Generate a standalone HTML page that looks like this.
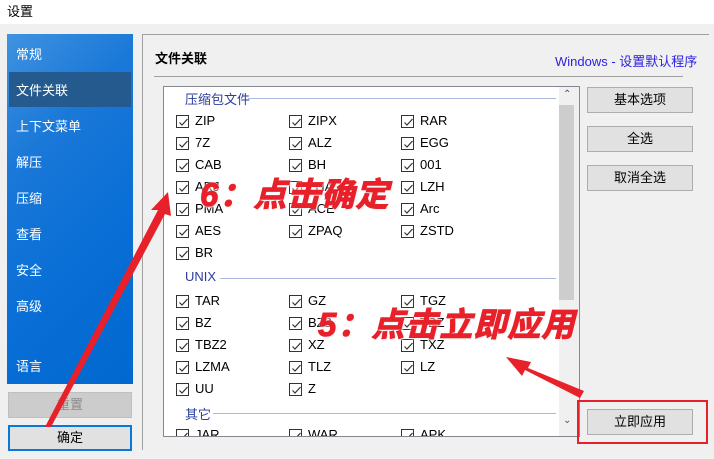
<!DOCTYPE html><html><head><meta charset="utf-8"><style>
*{margin:0;padding:0;box-sizing:border-box}
body{width:714px;height:459px;background:#f0f0f0;position:relative;overflow:hidden;font-family:"Liberation Sans","Noto Sans CJK SC",sans-serif;font-size:13px;color:#000}
.a{position:absolute}
.title{left:0;top:0;width:714px;height:24px;background:#fff}
.side{left:7px;top:34px;width:126px;height:350px;background:linear-gradient(135deg,#3f93e0 0%,#1a78d8 30%,#0a6fd6 60%,#0068d0 100%)}
.si{position:absolute;left:9px;color:#fff;font-size:13px}
.sel{left:9px;top:72px;width:122px;height:35px;background:#245a8e}
.btn{background:#e1e1e1;border:1px solid #adadad;text-align:center;line-height:24px;font-size:13px}
.cb{position:absolute;width:13px;height:13px;border:1px solid #333;background:#fff}
.cb svg{position:absolute;left:1px;top:1px}
.lb{position:absolute;font-size:13px;color:#000}
.gh{position:absolute;color:#2a3c9c;font-size:13px}
.gl{position:absolute;height:1px;background:#a9b9e0}
.ann{position:absolute;color:#e8202a;font-weight:bold;font-style:italic;font-size:33px;-webkit-text-stroke:1px #e8202a;text-shadow:0 0 2px #fff,0 0 3px #fff,1px 1px 2px #ddd;letter-spacing:1px;white-space:nowrap;line-height:36px}
</style></head><body>
<div class="a title"></div>
<div class="a" style="left:7px;top:1px;font-size:13px">设置</div>
<div class="a side"></div>
<div class="a sel"></div>
<div class="si" style="left:16px;top:44px">常规</div>
<div class="si" style="left:16px;top:80px">文件关联</div>
<div class="si" style="left:16px;top:116px">上下文菜单</div>
<div class="si" style="left:16px;top:152px">解压</div>
<div class="si" style="left:16px;top:188px">压缩</div>
<div class="si" style="left:16px;top:224px">查看</div>
<div class="si" style="left:16px;top:260px">安全</div>
<div class="si" style="left:16px;top:296px">高级</div>
<div class="si" style="left:16px;top:356px">语言</div>
<div class="a btn" style="left:8px;top:392px;width:124px;height:26px;background:#cccccc;border-color:#bfbfbf;color:#8a8a8a">重置</div>
<div class="a btn" style="left:8px;top:425px;width:124px;height:26px;border:2px solid #0a78d7;line-height:22px">确定</div>
<div class="a" style="left:142px;top:34px;width:567px;height:416px;border:1px solid #a0a0a0;border-right:none;border-bottom:none"></div>
<div class="a" style="left:155px;top:48px;font-weight:bold;font-size:13px">文件关联</div>
<div class="a" style="left:555px;top:51px;color:#2a1fe0;font-size:13px">Windows - 设置默认程序</div>
<div class="a" style="left:154px;top:76px;width:529px;height:1px;background:#a0a0a0"></div>
<div class="a" style="left:163px;top:86px;width:417px;height:351px;border:1px solid #828790;background:#fff"></div>
<div class="a" style="left:559px;top:87px;width:20px;height:349px;background:#f0f0f0"></div>
<div class="a" style="left:559px;top:105px;width:15px;height:195px;background:#cdcdcd"></div>
<div class="a" style="left:563px;top:89px;font-size:10px;color:#555">&#8963;</div>
<div class="a" style="left:563px;top:415px;font-size:10px;color:#555">&#8964;</div>
<div class="a btn" style="left:587px;top:87px;width:106px;height:26px">基本选项</div>
<div class="a btn" style="left:587px;top:126px;width:106px;height:26px">全选</div>
<div class="a btn" style="left:587px;top:165px;width:106px;height:26px">取消全选</div>
<div class="a btn" style="left:587px;top:409px;width:106px;height:26px">立即应用</div>
<div class="a" style="left:577px;top:400px;width:131px;height:44px;border:2px solid #e8202a"></div>
<div id="list"></div>
<div class="ann" style="left:200px;top:177px">6：点击确定</div>
<div class="ann" style="left:318px;top:307px">5：点击立即应用</div>
<svg class="a" style="left:0;top:0" width="714" height="459">
<polygon points="45,427 51,427 165,214 171,216 168,192 151,210 158,210" fill="#e8202a"/>
<polygon points="580,398 584,391 528,368 531,362 506,357 522,376 525,370" fill="#e8202a"/>
</svg>
<script>
var rows=[
[98,'g','压缩包文件',248],
[121,'ZIP','ZIPX','RAR'],[143,'7Z','ALZ','EGG'],[165,'CAB','BH','001'],[187,'ARJ','LHA','LZH'],[209,'PMA','ACE','Arc'],[231,'AES','ZPAQ','ZSTD'],[253,'BR'],
[278,'g','UNIX',220],
[301,'TAR','GZ','TGZ'],[323,'BZ','BZ2','TBZ'],[345,'TBZ2','XZ','TXZ'],[367,'LZMA','TLZ','LZ'],[389,'UU','Z'],
[413,'g','其它',213],
[435,'JAR','WAR','APK']];
var h='',xs=[176,289,401];
rows.forEach(function(r){var y=r[0];
if(r[1]=='g'){h+='<div class="gh" style="left:185px;top:'+(y-9)+'px">'+r[2]+'</div><div class="gl" style="left:'+r[3]+'px;top:'+y+'px;width:'+(556-r[3])+'px"></div>';return;}
for(var i=1;i<r.length;i++){var x=xs[i-1];
h+='<div class="cb" style="left:'+x+'px;top:'+(y-6)+'px"><svg width="11" height="11"><path d="M1.5 5.5 L4 8 L9.5 2" stroke="#333" stroke-width="1.2" fill="none"/></svg></div><div class="lb" style="left:'+(x+19)+'px;top:'+(y-8)+'px">'+r[i]+'</div>';}
});
var d=document.getElementById('list');d.style.cssText='position:absolute;left:0;top:0;width:714px;height:436px;overflow:hidden';d.innerHTML=h;
</script>
</body></html>
